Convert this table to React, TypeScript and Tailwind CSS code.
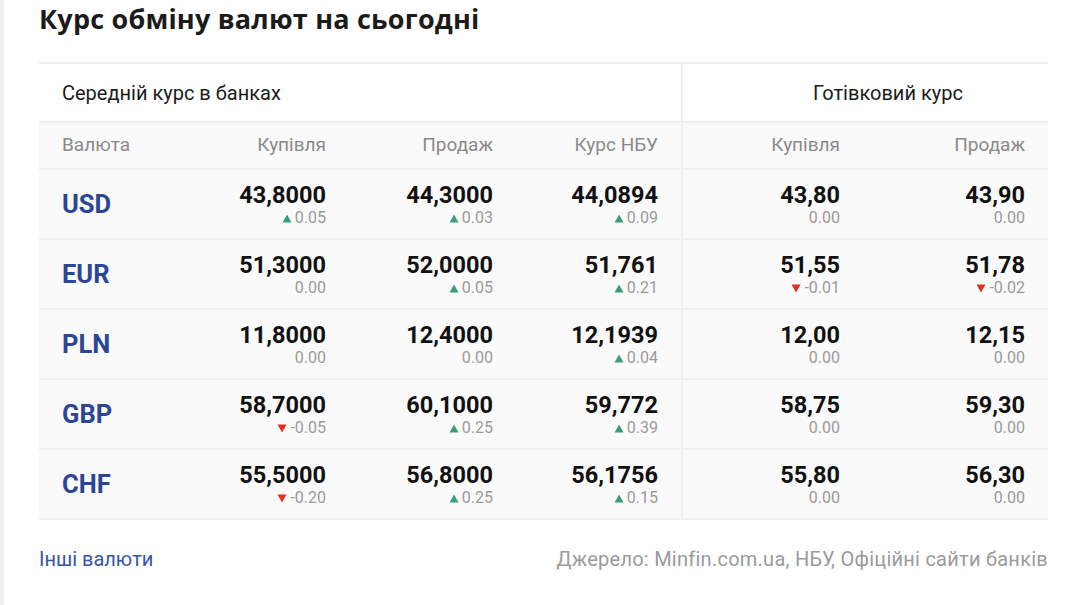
import React from "react";

type Cell = { v: string; d: string };
type Row = { code: string; cells: Cell[] };

const rows: Row[] = [
  {
    code: "USD",
    cells: [
      { v: "43,8000", d: "0.05" },
      { v: "44,3000", d: "0.03" },
      { v: "44,0894", d: "0.09" },
      { v: "43,80", d: "0.00" },
      { v: "43,90", d: "0.00" },
    ],
  },
  {
    code: "EUR",
    cells: [
      { v: "51,3000", d: "0.00" },
      { v: "52,0000", d: "0.05" },
      { v: "51,761", d: "0.21" },
      { v: "51,55", d: "-0.01" },
      { v: "51,78", d: "-0.02" },
    ],
  },
  {
    code: "PLN",
    cells: [
      { v: "11,8000", d: "0.00" },
      { v: "12,4000", d: "0.00" },
      { v: "12,1939", d: "0.04" },
      { v: "12,00", d: "0.00" },
      { v: "12,15", d: "0.00" },
    ],
  },
  {
    code: "GBP",
    cells: [
      { v: "58,7000", d: "-0.05" },
      { v: "60,1000", d: "0.25" },
      { v: "59,772", d: "0.39" },
      { v: "58,75", d: "0.00" },
      { v: "59,30", d: "0.00" },
    ],
  },
  {
    code: "CHF",
    cells: [
      { v: "55,5000", d: "-0.20" },
      { v: "56,8000", d: "0.25" },
      { v: "56,1756", d: "0.15" },
      { v: "55,80", d: "0.00" },
      { v: "56,30", d: "0.00" },
    ],
  },
];

const Delta = ({ d }: { d: string }) => {
  const n = parseFloat(d);
  return (
    <div className="flex items-center justify-end gap-[3px] text-[16px] leading-[20px] text-[#9a9a9a]">
      {n > 0 && (
        <svg width="10" height="9" viewBox="0 0 10 9">
          <path d="M5 0.5 L9.5 8.5 L0.5 8.5 Z" fill="#3a9d78" />
        </svg>
      )}
      {n < 0 && (
        <svg width="10" height="9" viewBox="0 0 10 9">
          <path d="M0.5 0.5 L9.5 0.5 L5 8.5 Z" fill="#e0321f" />
        </svg>
      )}
      <span>{d}</span>
    </div>
  );
};

const ValueCell = ({ c, cls }: { c: Cell; cls: string }) => (
  <div className={`flex flex-col items-end justify-center pt-[2px] ${cls}`}>
    <div className="text-[23.5px] leading-[26px] font-bold text-[#111]">{c.v}</div>
    <Delta d={c.d} />
  </div>
);

const App = () => {
  return (
    <div className="min-h-[605px] w-[1080px] border-l-4 border-[#eef0f3] bg-white pl-[35px] pr-[32px] font-['Roboto',sans-serif]">
      <h1 className="pt-[1px] text-[27px] leading-[36px] font-bold text-[#1b1b1b] font-['Open_Sans',sans-serif] tracking-[0.2px]">
        Курс обміну валют на сьогодні
      </h1>

      <div className="mt-[25px] border-t-2 border-[#efefef]">
        {/* group header */}
        <div className="grid grid-cols-[644px_1fr] border-b-2 border-[#efefef]">
          <div className="flex h-[57px] items-center border-r-2 border-[#efefef] pl-[23px] text-[20px] text-[#1b1b1b]">
            Середній курс в банках
          </div>
          <div className="flex h-[57px] items-center pl-[130px] text-[20px] text-[#1b1b1b]">
            Готівковий курс
          </div>
        </div>

        {/* column header */}
        <div className="grid h-[47px] grid-cols-[143px_167px_167px_167px_180px_1fr] border-b-2 border-[#efefef] bg-[#fafafa] text-[19px] text-[#8a8a8a]">
          <div className="flex items-center pl-[23px]">Валюта</div>
          <div className="flex items-center justify-end pr-[23px]">Купівля</div>
          <div className="flex items-center justify-end pr-[23px]">Продаж</div>
          <div className="flex items-center justify-end border-r-2 border-[#efefef] pr-[23px]">Курс НБУ</div>
          <div className="flex items-center justify-end pr-[23px]">Купівля</div>
          <div className="flex items-center justify-end pr-[23px]">Продаж</div>
        </div>

        {rows.map((r) => (
          <div
            key={r.code}
            className="grid h-[70px] grid-cols-[143px_167px_167px_167px_180px_1fr] border-b-2 border-[#efefef] bg-[#fafafa]"
          >
            <div className="flex items-center pl-[23px] pt-[1px] text-[25.5px] font-bold text-[#2b4697]">
              {r.code}
            </div>
            <ValueCell c={r.cells[0]} cls="pr-[23px]" />
            <ValueCell c={r.cells[1]} cls="pr-[23px]" />
            <ValueCell c={r.cells[2]} cls="pr-[23px] border-r-2 border-[#efefef]" />
            <ValueCell c={r.cells[3]} cls="pr-[23px]" />
            <ValueCell c={r.cells[4]} cls="pr-[23px]" />
          </div>
        ))}
      </div>

      <div className="mt-[24px] flex items-center justify-between text-[20px]">
        <a className="text-[#3556a4]">Інші валюти</a>
        <span className="tracking-[0.25px] text-[#9b9b9b]">Джерело: Minfin.com.ua, НБУ, Офіційні сайти банків</span>
      </div>
    </div>
  );
};

export default App;
